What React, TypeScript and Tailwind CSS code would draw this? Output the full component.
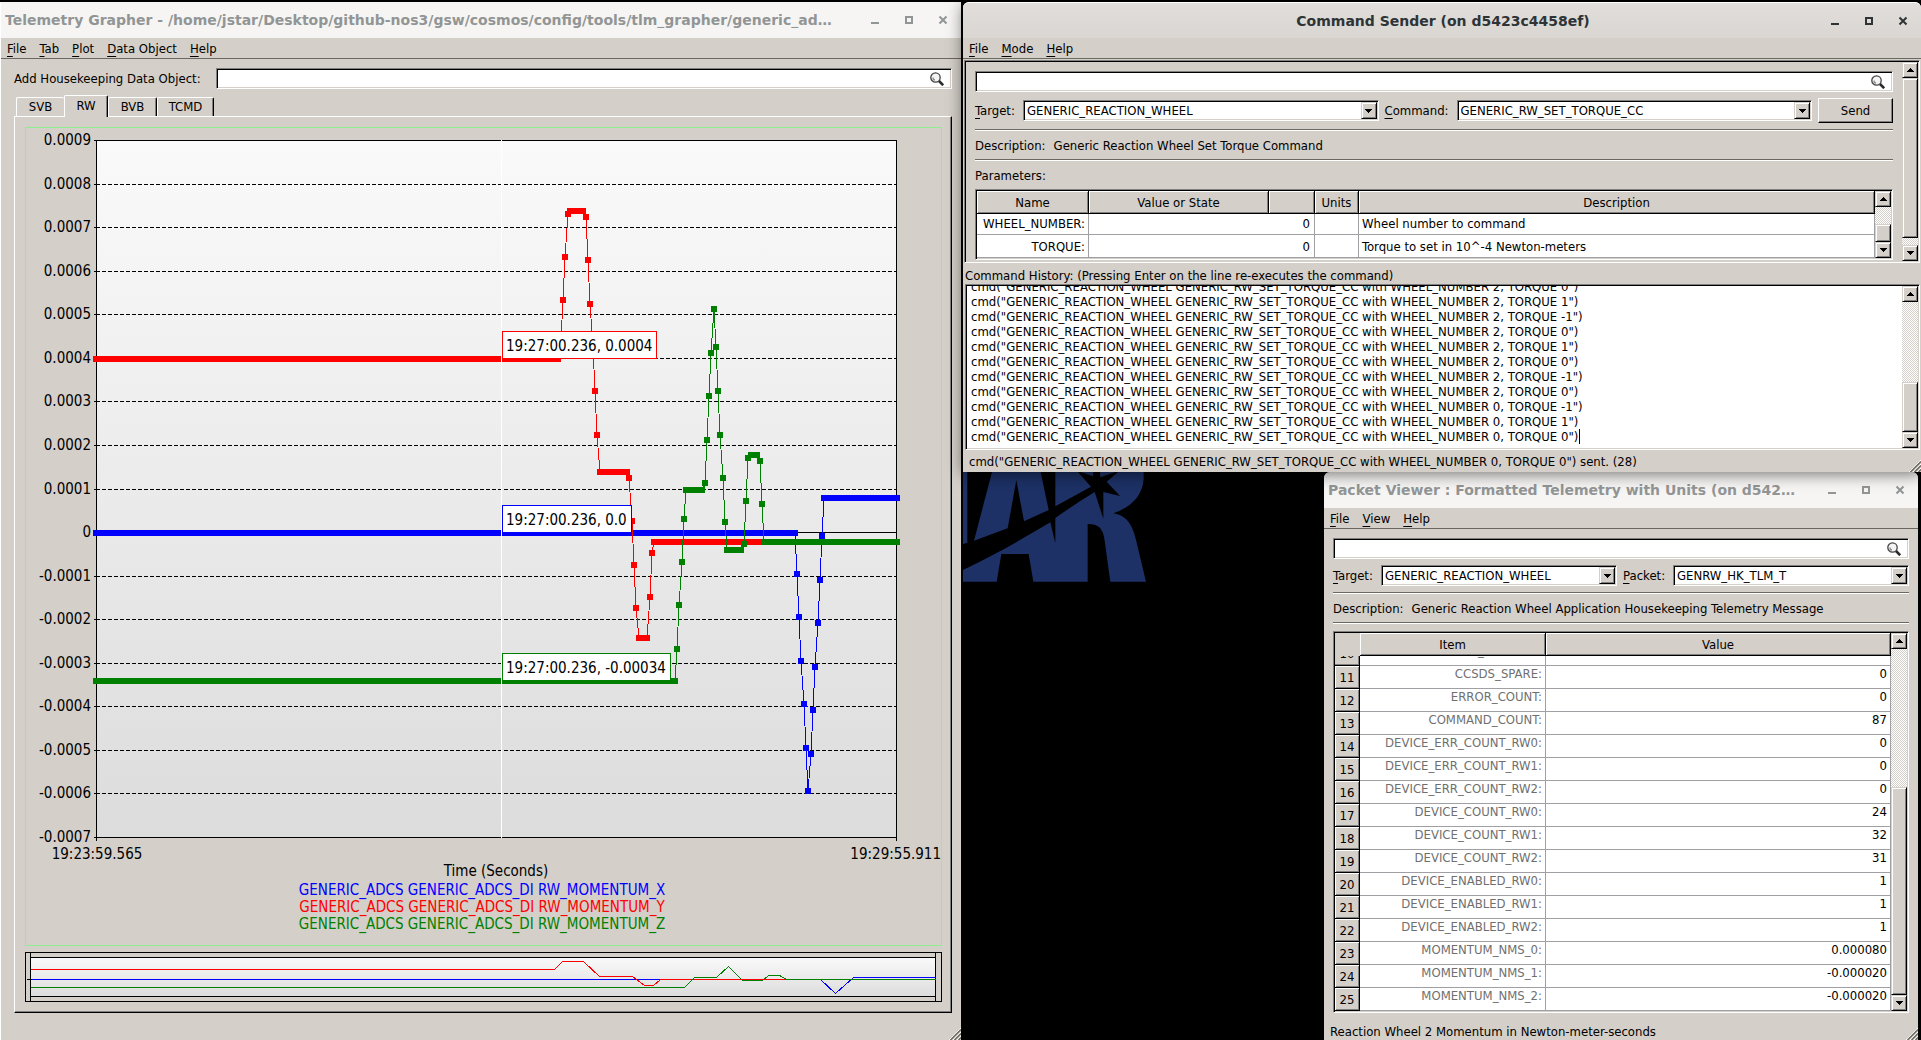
import React from 'react';

const sunken =
  'border border-t-[#808080] border-l-[#808080] border-b-white border-r-white shadow-[inset_1px_1px_0_#000,inset_-1px_-1px_0_#d4cfc8]';
const raised =
  'border border-t-white border-l-white border-b-black border-r-black shadow-[inset_-1px_-1px_0_#808080]';
const bevel =
  'border border-t-[#d4cfc8] border-l-[#d4cfc8] border-b-black border-r-black bg-[#d4cfc8] shadow-[inset_1px_1px_0_#fff,inset_-1px_-1px_0_#808080]';
const headCell =
  'border-r border-b border-black bg-[#d4cfc8] p-0 pt-[2px] font-normal shadow-[inset_1px_1px_0_#fff,inset_-1px_-1px_0_#808080]';
const gridCell = 'border-r border-b border-[#a0a0a4] p-0';

/* ---------- Window chrome ---------- */

interface TitleBarProps {
  title: string;
  active?: boolean;
}

const TitleBar: React.FC<TitleBarProps> = ({ title, active }) => (
  <header
    className={
      active
        ? 'flex h-[36px] shrink-0 items-center rounded-t-[6px] border-t border-white bg-linear-to-b from-[#e1dedb] to-[#dad6d2] pr-[8px] pl-[104px] text-[#2e3436]'
        : 'flex h-[36px] shrink-0 items-center bg-[#f6f5f4] pr-[8px] pl-[4px] text-[#929595]'
    }
  >
    <h1
      className={
        active
          ? "min-w-0 flex-1 truncate text-center font-['DejaVu_Sans'] text-[14px] font-bold"
          : "min-w-0 flex-1 truncate font-['DejaVu_Sans'] text-[14px] font-bold"
      }
    >
      {title}
    </h1>
    <div className="flex shrink-0 gap-[14px] pl-[6px]">
      <button aria-label="Minimize" className="h-5 w-5">
        <svg viewBox="0 0 20 20" className="h-5 w-5" shapeRendering="crispEdges">
          <rect x="6" y="12" width="8" height="2" fill="currentColor" />
        </svg>
      </button>
      <button aria-label="Maximize" className="h-5 w-5">
        <svg viewBox="0 0 20 20" className="h-5 w-5" shapeRendering="crispEdges">
          <rect x="7" y="7" width="6" height="6" fill="none" stroke="currentColor" strokeWidth="2" />
        </svg>
      </button>
      <button aria-label="Close" className="h-5 w-5">
        <svg viewBox="0 0 20 20" className="h-5 w-5">
          <path d="M6.500 6.500l7 7M13.500 6.500l-7 7" stroke="currentColor" strokeWidth="2" fill="none" />
        </svg>
      </button>
    </div>
  </header>
);

const MenuBar: React.FC<{ items: string[] }> = ({ items }) => (
  <nav className="flex h-[21px] shrink-0 items-center gap-[13px] border-b border-[#6b6861] pt-[2px] pl-[6px]">
    {items.map((item) => (
      <button key={item} className="leading-[18px]">
        <Mnemonic text={item} />
      </button>
    ))}
  </nav>
);

const Mnemonic: React.FC<{ text: string }> = ({ text }) => (
  <>
    <span className="underline decoration-1 underline-offset-[3px]">{text[0]}</span>
    {text.slice(1)}
  </>
);

const Grip: React.FC = () => (
  <svg viewBox="0 0 12 12" className="absolute right-0 bottom-0 h-3 w-3">
    <path d="M0 12L12 0M4 12L12 4M8 12L12 8" stroke="#fff" strokeWidth="1" />
    <path d="M1.500 12L12 1.500M5.500 12L12 5.500M9.500 12L12 9.500" stroke="#6b6861" strokeWidth="1.500" />
  </svg>
);

/* ---------- Controls ---------- */

const SearchBox: React.FC<{ id: string; label?: string }> = ({ id, label }) => (
  <div className={`flex h-[21px] flex-1 items-center bg-white pr-[7px] ${sunken}`}>
    <input id={id} aria-label={label} className="h-[17px] min-w-0 flex-1 bg-transparent px-1 outline-none" />
    <svg viewBox="0 0 14 14" className="h-[14px] w-[14px]">
      <circle cx="5.500" cy="5.500" r="4.700" fill="#f4f4f4" stroke="#444" strokeWidth="1.300" />
      <path d="M3 5.500a2.500 2.500 0 0 0 2 2.700" fill="none" stroke="#888" strokeWidth="1.200" />
      <path d="M9 9l4.200 4.200" stroke="#2b2b2b" strokeWidth="2.600" />
    </svg>
  </div>
);

const Combo: React.FC<{ id: string; value: string }> = ({ id, value }) => (
  <div className={`relative h-[21px] min-w-0 flex-1 bg-white ${sunken}`}>
    <select
      id={id}
      defaultValue={value}
      className="block h-[19px] w-full appearance-none bg-transparent pl-[3px] leading-[19px] outline-none"
    >
      <option>{value}</option>
    </select>
    <span
      className={`pointer-events-none absolute top-[1px] right-[1px] flex h-[17px] w-[16px] items-center justify-center ${bevel}`}
    >
      <svg viewBox="0 0 7 4" className="h-1 w-[7px]" shapeRendering="crispEdges">
        <path d="M0 0h7v1h-1v1h-1v1h-1v1h-1v-1h-1v-1h-1v-1h-1z" />
      </svg>
    </span>
  </div>
);

const ScrollBar: React.FC<{ before: number; thumb: number; after: number }> = ({ before, thumb, after }) => (
  <div className="flex w-[16px] shrink-0 flex-col bg-[repeating-conic-gradient(#fff_0_25%,#d4cfc8_0_50%)] bg-[length:2px_2px]">
    <button aria-label="Scroll up" className={`flex h-[16px] shrink-0 items-center justify-center ${bevel}`}>
      <svg viewBox="0 0 7 4" className="h-1 w-[7px]" shapeRendering="crispEdges">
        <path d="M3 0h1v1h1v1h1v1h1v1h-7v-1h1v-1h1v-1h1z" />
      </svg>
    </button>
    <div className="flex min-h-0 flex-1 flex-col">
      <div style={{ flexGrow: before }} />
      <div className={bevel} style={{ flexGrow: thumb }} />
      <div style={{ flexGrow: after }} />
    </div>
    <button aria-label="Scroll down" className={`flex h-[16px] shrink-0 items-center justify-center ${bevel}`}>
      <svg viewBox="0 0 7 4" className="h-1 w-[7px]" shapeRendering="crispEdges">
        <path d="M0 0h7v1h-1v1h-1v1h-1v1h-1v-1h-1v-1h-1v-1h-1z" />
      </svg>
    </button>
  </div>
);

const Rule: React.FC = () => <hr className="mt-[6px] h-[2px] border-t border-b border-t-[#6b6861] border-b-white" />;

const Caption: React.FC<{ label: string; text?: string }> = ({ label, text }) => (
  <p className="mt-[6px] h-[16px] leading-[18px]">
    {label}
    {text && <span className="pl-[8px]">{text}</span>}
  </p>
);

/* ---------- Telemetry Grapher ---------- */

interface Series {
  color: string;
  // long flat runs, drawn as [x1, x2, y]
  runs: number[][];
  points: number[][];
  line: string;
  overview: string;
}

const series: Series[] = [
  {
    color: '#0000ff',
    runs: [[93, 798, 533], [821, 900, 498]],
    points: [
      [797, 574], [799, 617], [801, 661], [804, 704], [806, 748], [808, 791],
      [811, 754], [813, 710], [815, 667], [818, 623], [820, 580], [822, 536],
    ],
    line: '795,533 797,574 799,617 801,661 804,704 806,748 808,791 811,754 813,710 815,667 818,623 820,580 822,536 824,498',
    overview: '30,979 820,979 835,993 853,977 935,977',
  },
  {
    color: '#ff0000',
    runs: [[93, 561, 359], [567, 586, 211], [597, 630, 472], [636, 650, 638], [651, 900, 542]],
    points: [
      [563, 300], [565, 257], [568, 214], [586, 217], [588, 260], [590, 304], [593, 347], [595, 391],
      [597, 435], [629, 478], [632, 521], [634, 565], [636, 608], [650, 597], [652, 553],
    ],
    line: '560,359 563,300 565,257 568,214 570,211 583,211 586,217 588,260 590,304 593,347 595,391 597,435 600,472 627,472 629,478 632,521 634,565 636,608 639,638 647,638 650,597 652,553 654,542',
    overview: '30,969 554,969 562,961 583,961 599,976 632,976 644,985 653,985 660,979 935,979',
  },
  {
    color: '#008000',
    runs: [[93, 678, 681], [683, 705, 490], [724, 744, 550], [748, 760, 455], [761, 900, 542]],
    points: [
      [677, 649], [679, 605], [682, 562], [684, 519], [705, 483], [707, 440], [709, 396], [711, 353],
      [714, 309], [716, 347], [718, 391], [720, 435], [723, 478], [725, 522], [744, 544], [746, 501],
      [748, 458], [760, 461], [762, 504],
    ],
    line: '675,681 677,649 679,605 682,562 684,519 686,490 703,490 705,483 707,440 709,396 711,353 714,309 716,347 718,391 720,435 723,478 725,522 727,550 743,550 744,544 746,501 748,458 750,455 758,455 760,461 762,504 764,542',
    overview: '30,987 684,987 694,977 716,977 728,966 742,980 762,980 768,975 779,975 786,979 935,979',
  },
];

const yLabels = [
  '0.0009', '0.0008', '0.0007', '0.0006', '0.0005', '0.0004', '0.0003', '0.0002', '0.0001',
  '0', '-0.0001', '-0.0002', '-0.0003', '-0.0004', '-0.0005', '-0.0006', '-0.0007',
];

const callouts = [
  { y: 331, w: 155, color: '#ff0000', text: '19:27:00.236, 0.0004' },
  { y: 505, w: 130, color: '#0000ff', text: '19:27:00.236, 0.0' },
  { y: 653, w: 169, color: '#008000', text: '19:27:00.236, -0.00034' },
];

const legend = [
  { y: 895, color: '#0000ff', text: 'GENERIC_ADCS GENERIC_ADCS_DI RW_MOMENTUM_X' },
  { y: 912, color: '#ff0000', text: 'GENERIC_ADCS GENERIC_ADCS_DI RW_MOMENTUM_Y' },
  { y: 929, color: '#008000', text: 'GENERIC_ADCS GENERIC_ADCS_DI RW_MOMENTUM_Z' },
];

const gridY = (i: number) => Math.round(140 + 43.565 * i);

const Plot: React.FC = () => (
  <svg viewBox="25 127 917 819" className="block h-auto w-full text-[15px]">
    <defs>
      <linearGradient id="plot-bg" x1="0" y1="0" x2="0" y2="1">
        <stop offset="0" stopColor="#fafafa" />
        <stop offset="1" stopColor="#dcdcdc" />
      </linearGradient>
    </defs>
    <g shapeRendering="crispEdges">
      <rect x="25.500" y="127.500" width="916" height="818" fill="none" stroke="#90ee90" />
      <rect x="96.500" y="140.500" width="800" height="697" fill="url(#plot-bg)" stroke="#000" />
      {yLabels.map((label, i) => (
        <g key={label} stroke="#000">
          <path d={`M94 ${gridY(i) + 0.5}H96`} />
          <path d={`M96 ${gridY(i) + 0.5}H896`} strokeDasharray={i === 9 ? undefined : '4 2'} />
        </g>
      ))}
      <path d="M96.500 837V841M896.500 837V841" stroke="#000" />
      {series.map((s) => (
        <g key={s.color}>
          <polyline points={s.line} fill="none" stroke={s.color} />
          {s.runs.map(([x1, x2, y]) => (
            <rect key={x1} x={x1} y={y - 3} width={x2 - x1} height="6" fill={s.color} />
          ))}
          {s.points.map(([x, y]) => (
            <rect key={`${x}-${y}`} x={x - 3} y={y - 3} width="6" height="6" fill={s.color} />
          ))}
        </g>
      ))}
      <path d="M501.500 140V838" stroke="#fff" />
      {callouts.map((c) => (
        <rect key={c.y} x="502.500" y={c.y + 0.5} width={c.w - 1} height="27" fill="#fff" stroke={c.color} />
      ))}
    </g>
    {callouts.map((c) => (
      <text key={c.y} x="506" y={c.y + 20}>{c.text}</text>
    ))}
    {yLabels.map((label, i) => (
      <text key={label} x="91" y={gridY(i) + 5} textAnchor="end">{label}</text>
    ))}
    <text x="97" y="859" textAnchor="middle">19:23:59.565</text>
    <text x="941" y="859" textAnchor="end">19:29:55.911</text>
    <text x="496" y="876" textAnchor="middle">Time (Seconds)</text>
    {legend.map((l) => (
      <text key={l.y} x="482" y={l.y} textAnchor="middle" fill={l.color}>{l.text}</text>
    ))}
  </svg>
);

const Overview: React.FC = () => (
  <svg viewBox="25 952 917 50" className="mt-[6px] block h-auto w-full" shapeRendering="crispEdges">
    <rect x="25.500" y="952.500" width="916" height="49" fill="none" stroke="#000" />
    <rect x="30.500" y="957.500" width="905" height="39" fill="url(#plot-bg)" stroke="#000" />
    <path d="M30.500 952V1002M935.500 952V1002M27 979.500H30" stroke="#000" />
    <g transform="translate(0.500 0.500)">
      {series.map((s) => (
        <polyline key={s.color} points={s.overview} fill="none" stroke={s.color} />
      ))}
    </g>
  </svg>
);

const tabs = [
  { name: 'SVB', size: 'w-[48px]' },
  { name: 'RW', size: 'w-[44px]' },
  { name: 'BVB', size: 'w-[49px]' },
  { name: 'TCMD', size: 'w-[57px]' },
];

const TelemetryGrapher: React.FC = () => {
  const [tab, setTab] = React.useState('RW');

  return (
    <section className="relative flex min-w-0 flex-[960] flex-col border-l border-white bg-[#d4cfc8]">
      <TitleBar title="Telemetry Grapher - /home/jstar/Desktop/github-nos3/gsw/cosmos/config/tools/tlm_grapher/generic_ad…" />
      <MenuBar items={['File', 'Tab', 'Plot', 'Data Object', 'Help']} />
      <div className="flex items-center pt-[9px] pr-[9px] pl-[13px]">
        <label htmlFor="housekeeping" className="w-[202px] shrink-0">
          Add Housekeeping Data Object:
        </label>
        <SearchBox id="housekeeping" />
      </div>
      <div role="tablist" className="mt-[6px] flex h-[21px] items-end pl-[15px]">
        {tabs.map(({ name, size }) => (
          <button
            key={name}
            role="tab"
            aria-selected={tab === name}
            onClick={() => setTab(name)}
            className={`${size} rounded-t-[2px] border-t border-l border-white ${
              tab === name
                ? 'z-10 -mb-px h-[22px] border-r border-r-black bg-[#d4cfc8] pb-[2px] shadow-[inset_-1px_0_0_#808080]'
                : name === 'SVB'
                  ? 'h-[19px]'
                  : 'h-[19px] border-r border-r-black shadow-[inset_-1px_0_0_#808080]'
            }`}
          >
            {name}
          </button>
        ))}
      </div>
      <div className="mr-[9px] ml-[13px] border border-t-white border-r-black border-b-black border-l-white pt-[10px] pr-[9px] pb-[10px] pl-[10px] shadow-[inset_-1px_-1px_0_#808080]">
        <Plot />
        <Overview />
      </div>
      <Grip />
    </section>
  );
};

/* ---------- Command Sender ---------- */

const history = [
  [2, 0], [2, 1], [2, -1], [2, 0], [2, 1], [2, 0], [2, -1], [2, 0], [0, -1], [0, 1], [0, 0],
]
  .map(([wheel, torque]) => `cmd("GENERIC_REACTION_WHEEL GENERIC_RW_SET_TORQUE_CC with WHEEL_NUMBER ${wheel}, TORQUE ${torque}")`)
  .join('\n');

const CommandSender: React.FC = () => {
  const historyRef = React.useRef<HTMLTextAreaElement>(null);

  React.useLayoutEffect(() => {
    if (historyRef.current) historyRef.current.scrollTop = historyRef.current.scrollHeight;
  }, []);

  return (
    <section className="relative z-10 flex h-[470px] shrink-0 flex-col rounded-t-[6px] bg-[#d4cfc8] shadow-[0_2px_16px_rgba(0,0,0,0.55)]">
      <TitleBar title="Command Sender (on d5423c4458ef)" active />
      <MenuBar items={['File', 'Mode', 'Help']} />
      <div className={`mx-[1px] mt-[1px] flex h-[203px] shrink-0 p-[1px] ${sunken}`}>
        <div className="min-w-0 flex-1 overflow-hidden px-[9px] pt-[9px]">
          <div className="flex">
            <SearchBox id="command-search" label="Search commands" />
          </div>
          <div className="mt-[6px] flex items-center">
            <label htmlFor="command-target" className="w-[48px] shrink-0"><Mnemonic text="Target:" /></label>
            <Combo id="command-target" value="GENERIC_REACTION_WHEEL" />
            <label htmlFor="command-name" className="ml-[6px] w-[72px] shrink-0"><Mnemonic text="Command:" /></label>
            <Combo id="command-name" value="GENERIC_RW_SET_TORQUE_CC" />
            <button className={`ml-[6px] h-[25px] w-[75px] ${raised}`}>Send</button>
          </div>
          <Rule />
          <Caption label="Description:" text="Generic Reaction Wheel Set Torque Command" />
          <Rule />
          <Caption label="Parameters:" />
          <div className={`mt-[6px] flex h-[71px] bg-white p-[1px] ${sunken}`}>
            <table className="w-full flex-1 table-fixed border-separate border-spacing-0">
              <colgroup>
                <col className="w-[112px]" />
                <col className="w-[180px]" />
                <col className="w-[46px]" />
                <col className="w-[44px]" />
                <col />
              </colgroup>
              <thead>
                <tr className="h-[23px]">
                  <th className={headCell}>Name</th>
                  <th className={headCell}>Value or State</th>
                  <th className={headCell} />
                  <th className={headCell}>Units</th>
                  <th className={headCell}>Description</th>
                </tr>
              </thead>
              <tbody>
                <tr className="h-[21px] align-bottom">
                  <ParamCells name="WHEEL_NUMBER:" value="0" description="Wheel number to command" />
                </tr>
                <tr className="h-[23px] align-bottom">
                  <ParamCells name="TORQUE:" value="0" description="Torque to set in 10^-4 Newton-meters" />
                </tr>
              </tbody>
            </table>
            <ScrollBar before={18} thumb={17} after={0} />
          </div>
        </div>
        <ScrollBar before={0} thumb={160} after={7} />
      </div>
      <label htmlFor="history" className="mx-[2px] h-[21px] pt-[5px]">
        Command History: (Pressing Enter on the line re-executes the command)
      </label>
      <div className={`relative mr-[1px] ml-[2px] flex h-[166px] bg-white p-[1px] ${sunken}`}>
        <textarea
          id="history"
          ref={historyRef}
          defaultValue={history}
          spellCheck={false}
          className="min-w-0 flex-1 resize-none overflow-hidden pb-[4px] pl-[4px] leading-[15px] whitespace-pre outline-none"
        />
        <span className="absolute bottom-[5px] left-[613px] h-[15px] w-px bg-black" />
        <ScrollBar before={81} thumb={49} after={0} />
      </div>
      <p className="h-[22px] pl-[6px] leading-[24px]">
        cmd("GENERIC_REACTION_WHEEL GENERIC_RW_SET_TORQUE_CC with WHEEL_NUMBER 0, TORQUE 0") sent. (28)
      </p>
      <Grip />
    </section>
  );
};

const ParamCells: React.FC<{ name: string; value: string; description: string }> = ({ name, value, description }) => (
  <>
    <td className={`${gridCell} pr-[3px] pb-[2px] text-right`}>{name}</td>
    <td colSpan={2} className={`${gridCell} pr-[4px] pb-[2px] text-right`}>{value}</td>
    <td className={gridCell} />
    <td className={`${gridCell} pb-[2px] pl-[3px]`}>{description}</td>
  </>
);

/* ---------- Packet Viewer ---------- */

const packetRows = [
  [11, 'CCSDS_SPARE:', '0'],
  [12, 'ERROR_COUNT:', '0'],
  [13, 'COMMAND_COUNT:', '87'],
  [14, 'DEVICE_ERR_COUNT_RW0:', '0'],
  [15, 'DEVICE_ERR_COUNT_RW1:', '0'],
  [16, 'DEVICE_ERR_COUNT_RW2:', '0'],
  [17, 'DEVICE_COUNT_RW0:', '24'],
  [18, 'DEVICE_COUNT_RW1:', '32'],
  [19, 'DEVICE_COUNT_RW2:', '31'],
  [20, 'DEVICE_ENABLED_RW0:', '1'],
  [21, 'DEVICE_ENABLED_RW1:', '1'],
  [22, 'DEVICE_ENABLED_RW2:', '1'],
  [23, 'MOMENTUM_NMS_0:', '0.000080'],
  [24, 'MOMENTUM_NMS_1:', '-0.000020'],
  [25, 'MOMENTUM_NMS_2:', '-0.000020'],
];

const PacketViewer: React.FC = () => (
  <section className="relative mr-[3px] flex min-w-0 flex-[594] flex-col rounded-t-[6px] bg-[#d4cfc8]">
    <div className="overflow-hidden rounded-t-[6px]">
      <TitleBar title="Packet Viewer : Formatted Telemetry with Units (on d542…" />
    </div>
    <MenuBar items={['File', 'View', 'Help']} />
    <div className="px-[9px] pt-[9px]">
      <div className="flex">
        <SearchBox id="packet-search" label="Search packets" />
      </div>
      <div className="mt-[6px] flex items-center">
        <label htmlFor="packet-target" className="w-[48px] shrink-0"><Mnemonic text="Target:" /></label>
        <Combo id="packet-target" value="GENERIC_REACTION_WHEEL" />
        <label htmlFor="packet-name" className="ml-[6px] w-[50px] shrink-0"><Mnemonic text="Packet:" /></label>
        <Combo id="packet-name" value="GENRW_HK_TLM_T" />
      </div>
      <Rule />
      <Caption label="Description:" text="Generic Reaction Wheel Application Housekeeping Telemetry Message" />
      <Rule />
      <div className={`mt-[7px] flex bg-white p-[1px] ${sunken}`}>
        <table className="w-full flex-1 table-fixed border-separate border-spacing-0">
          <colgroup>
            <col className="w-[25px]" />
            <col className="w-[186px]" />
            <col />
          </colgroup>
          <thead>
            <tr className="h-[23px]">
              <th className="bg-[#d4cfc8] p-0" />
              <th className={headCell}>Item</th>
              <th className={headCell}>Value</th>
            </tr>
          </thead>
          <tbody>
            {/* row 10 is scrolled half under the header */}
            <tr className="h-[10px]">
              <th scope="row" className="border-r border-b border-black bg-[#d4cfc8] p-0 font-normal shadow-[inset_-1px_-1px_0_#808080]">
                <div className="flex h-[9px] flex-col justify-end overflow-hidden">
                  <div className="h-[19px] shrink-0">10</div>
                </div>
              </th>
              <td className={`${gridCell} pr-[3px] text-right text-[#6f6f6f]`}>
                <div className="flex h-[9px] flex-col justify-end overflow-hidden">
                  <div className="h-[22px] shrink-0">CCSDS_SUBSECS:</div>
                </div>
              </td>
              <td className={gridCell} />
            </tr>
            {packetRows.map(([row, item, value]) => (
              <tr key={row} className="h-[23px]">
                <th scope="row" className={headCell}>{row}</th>
                <td className={`${gridCell} pr-[3px] text-right align-top text-[#6f6f6f]`}>{item}</td>
                <td className={`${gridCell} pr-[3px] text-right align-top`}>{value}</td>
              </tr>
            ))}
          </tbody>
        </table>
        <ScrollBar before={139} thumb={207} after={0} />
      </div>
    </div>
    <p className="pt-[11px] pl-[6px]">Reaction Wheel 2 Momentum in Newton-meter-seconds</p>
    <Grip />
  </section>
);

/* ---------- Desktop ---------- */

const Wallpaper: React.FC = () => (
  <div className="min-w-0 flex-[361] overflow-hidden">
    <svg viewBox="9 576 552 330" className="h-[110px] w-[184px]" fill="#1d3166">
      <path d="M9 576H22V788L9 792Z" />
      <path d="M96 576H242L266 690L192 724L169 600L143 745L42 782Z" />
      <path d="M286 576H354L393 620L286 679Z" />
      <path d="M362 576H400L399 589Z" />
      <path d="M420 576H466L421 592Z" />
      <path d="M474 576H551V596C548 650 510 682 460 700C502 706 520 740 529 784L558 905H451L434 782C429 745 416 731 383 732V905H220L206 822H124L110 905H9V870C110 822 190 775 271 727L286 790V714Q345 672 404 636L430 716V636L480 648L440 605Z" />
    </svg>
  </div>
);

export default function App() {
  return (
    <main className="flex h-screen gap-[2px] overflow-hidden bg-black pt-[2px] font-['DejaVu_Sans_Condensed','DejaVu_Sans',sans-serif] text-[13px] leading-[16px] text-black">
      <TelemetryGrapher />
      <div className="flex min-w-0 flex-[958] flex-col">
        <CommandSender />
        <div className="flex min-h-0 flex-1">
          <Wallpaper />
          <PacketViewer />
        </div>
      </div>
    </main>
  );
}
